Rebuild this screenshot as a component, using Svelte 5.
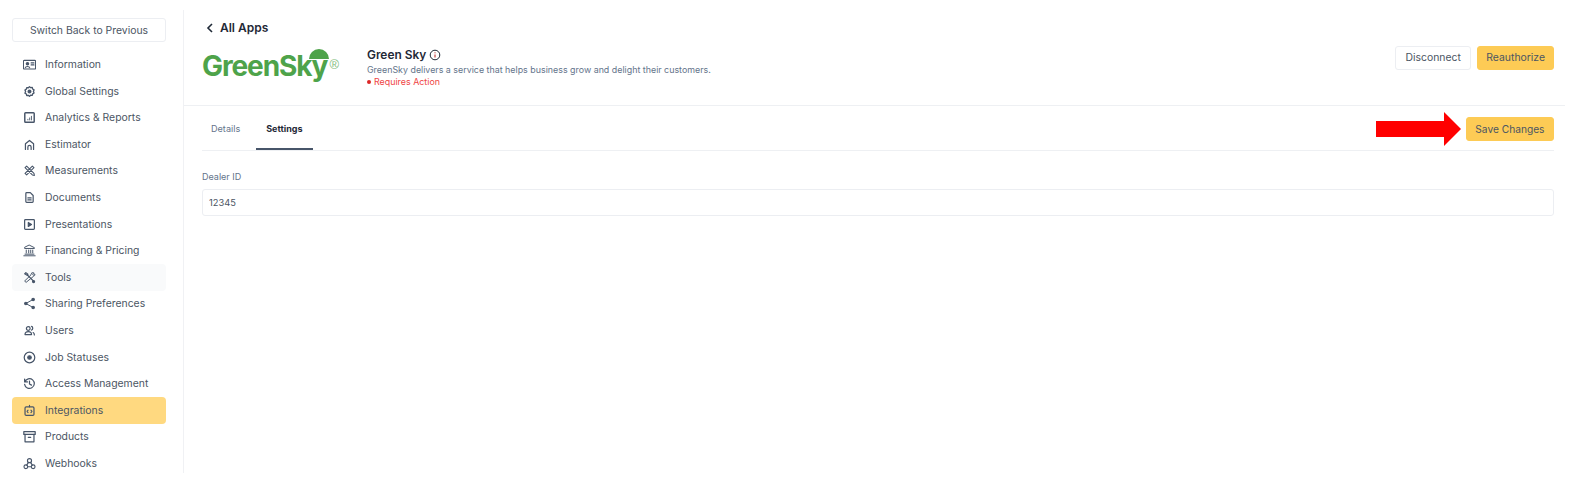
<script lang="ts">
  const items = [
    { label: "Information", icon: "info" },
    { label: "Global Settings", icon: "gear" },
    { label: "Analytics & Reports", icon: "chart" },
    { label: "Estimator", icon: "home" },
    { label: "Measurements", icon: "measure" },
    { label: "Documents", icon: "doc" },
    { label: "Presentations", icon: "play" },
    { label: "Financing & Pricing", icon: "bank" },
    { label: "Tools", icon: "tools", hover: true },
    { label: "Sharing Preferences", icon: "share" },
    { label: "Users", icon: "users" },
    { label: "Job Statuses", icon: "status" },
    { label: "Access Management", icon: "history" },
    { label: "Integrations", icon: "code", active: true },
    { label: "Products", icon: "archive" },
    { label: "Webhooks", icon: "hook" },
  ];
</script>

{#snippet icon(name: string)}
  <svg class="nav-icon" viewBox="0 0 16 16" fill="none" stroke="currentColor" stroke-width="1.4" stroke-linecap="round" stroke-linejoin="round">
    {#if name === "info"}
      <rect x="0.500" y="3" width="15" height="10.500" rx="1" /><circle cx="5.500" cy="7" r="1.500" fill="currentColor" /><path d="M2.800 12c.4-2 5-2 5.400 0M10 6h3.500M10 8.500h3.500" />
    {:else if name === "gear"}
      <path d="M8 2l1.400 1.300 2-.2.500 1.900 1.700 1-.8 1.900.8 2-1.700 1-.5 1.900-2-.2L8 14l-1.400-1.300-2 .2-.5-1.900-1.700-1 .8-2-.8-1.900 1.700-1 .5-1.900 2 .2z" stroke-width="1.600" /><circle cx="8" cy="8" r="1.800" fill="currentColor" />
    {:else if name === "chart"}
      <rect x="2.200" y="2.200" width="11.600" height="11.600" rx="1" stroke-width="1.800" /><path d="M6 11v-.8M8.200 11V8.500M10.400 11V6.500" stroke-width="1.100" />
    {:else if name === "home"}
      <path d="M3 14V7l5-4 5 4v7M6 14v-3a2 2 0 0 1 4 0v3" stroke-width="1.500" />
    {:else if name === "measure"}
      <path d="M2.500 4.500l2-2 9 9 .5 2.500-2.500-.5zM13.500 4.500l-2-2-9 9 2 2z" stroke-width="1.300" />
    {:else if name === "doc"}
      <path d="M3.500 3a1 1 0 0 1 1-1h4.500L12.500 5.500V13a1 1 0 0 1-1 1h-7a1 1 0 0 1-1-1zM6 8.500h4M6 11h4" stroke-width="1.500" />
    {:else if name === "play"}
      <rect x="2" y="2" width="12" height="12" rx="1" stroke-width="1.500" /><path d="M6.500 5.500v5l4-2.500z" fill="currentColor" />
    {:else if name === "bank"}
      <path d="M8 1.500l6 3v1H2v-1zM1 14.500h14M2.500 12.500h11M4 7.500v3.500M7 7.500v3.500M9.500 7.500v3.500M12 7.500v3.500" stroke-width="1.200" />
    {:else if name === "tools"}
      <path d="M2 3.500l1.500-1.500 2.500 2-.5 1.500zM6 5.500L13 12.500" stroke-width="1.500" /><path d="M11 2.500c1-.5 2-.5 2.800 0L12 4.300l.7 1 1.800-1.500c.3 1-.2 2.300-1.500 2.700L3.800 14 2 12.300l7.800-7.500c.1-1 .4-1.800 1.200-2.300z" stroke-width="1.200" /><circle cx="13" cy="13" r="1.300" fill="currentColor" />
    {:else if name === "share"}
      <circle cx="3.500" cy="8" r="1.500" fill="currentColor" /><circle cx="12.500" cy="3" r="1.500" fill="currentColor" /><circle cx="12.500" cy="13" r="1.500" fill="currentColor" /><path d="M3.500 8l9-5M3.500 8l9 5" stroke-width="1.200" />
    {:else if name === "users"}
      <circle cx="6.500" cy="5.500" r="2.300" stroke-width="1.500" /><path d="M2.500 13c0-5 8-5 8 0zM10.500 3c2 .5 2 4 0 4.500M14 13.500c0-1.500-.5-2.500-1.500-3" stroke-width="1.500" />
    {:else if name === "status"}
      <circle cx="8" cy="8" r="6.500" stroke-width="1.500" /><circle cx="8" cy="8" r="2.200" fill="currentColor" />
    {:else if name === "history"}
      <path d="M2 2.500v3.500h3.500M2.300 6A6 6 0 1 1 2 9M8 5v3.500l2.500 1.500" stroke-width="1.500" />
    {:else if name === "code"}
      <rect x="2.500" y="3.500" width="11" height="10.500" rx="1.500" stroke-width="1.500" /><path d="M8 1.500v2M6.200 7.500L5 9l1.200 1.500M9.800 7.500L11 9l-1.200 1.500" />
    {:else if name === "archive"}
      <rect x="1" y="2" width="14" height="3.500" stroke-width="1.500" /><path d="M2.500 5.500V14.500h11V5.500M6.500 9h3" stroke-width="1.500" />
    {:else if name === "hook"}
      <circle cx="8" cy="4.500" r="2.500" /><circle cx="3.500" cy="12" r="2.300" /><circle cx="12.500" cy="12" r="2.300" /><path d="M6.500 7L4.500 10M6 12h4M9.500 7l2 3" />
    {/if}
  </svg>
{/snippet}

<div class="page">
  <aside class="sidebar">
    <button class="switch">Switch Back to Previous</button>
    <nav>
      {#each items as item}
        <div class="nav-item" class:hover={item.hover} class:active={item.active}>
          {@render icon(item.icon)}
          <span>{item.label}</span>
        </div>
      {/each}
    </nav>
  </aside>

  <main>
    <header class="app-header">
      <div class="back">
        <svg width="8" height="10" viewBox="0 0 8 10" fill="none" stroke="#1f2937" stroke-width="1.600"><path d="M6 1L2 5l4 4" /></svg>
        All Apps
      </div>
      <div class="app-row">
        <div class="logo">
          <svg class="dome" viewBox="0 0 20 10"><path d="M0 10a10 10 0 0 1 20 0z" fill="#4ea34a" /></svg>
          <span class="logo-text">GreenSky</span><span class="reg">®</span>
        </div>
        <div class="app-info">
          <div class="app-title">
            Green Sky
            <svg width="12" height="12" viewBox="0 0 12 12" fill="none" stroke="#b91c1c"><circle cx="6" cy="6" r="4.800" stroke="#1f2937" /><path d="M6 5.500v3M6 3.300v1" /></svg>
          </div>
          <p class="desc">GreenSky delivers a service that helps business grow and delight their customers.</p>
          <p class="status"><i></i>Requires Action</p>
        </div>
        <div class="actions">
          <button class="btn">Disconnect</button>
          <button class="btn primary">Reauthorize</button>
        </div>
      </div>
    </header>

    <section class="content">
      <div class="tabs">
        <span class="tab">Details</span>
        <span class="tab current">Settings</span>
        <div class="tab-actions">
          <svg class="arrow" width="85" height="34" viewBox="0 0 85 34"><path d="M0 9h68V0l17 17-17 17V25H0z" fill="#ff0000" /></svg>
          <button class="btn primary save">Save Changes</button>
        </div>
      </div>
      <label class="field">
        <span>Dealer ID</span>
        <input value="12345" />
      </label>
    </section>
  </main>
</div>

<style>
  :global(body) {
    background: #fff;
    font-family: Inter, "Liberation Sans", sans-serif;
  }

  .page {
    display: flex;
    height: 482px;
    overflow: hidden;
    color: #4b5563;
    font-size: 10.400px;
  }

  .sidebar {
    box-sizing: border-box;
    width: 184px;
    height: 463px;
    margin-top: 10px;
    padding: 8px 17px 0 12px;
    border-right: 1px solid #f0f1f4;
    flex: none;
  }

  .switch {
    display: block;
    width: 100%;
    height: 24px;
    padding: 0;
    margin-bottom: 9.200px;
    background: #fff;
    border: 1px solid #eceef2;
    border-radius: 3px;
    color: #4b5563;
    font: 10.400px Inter, sans-serif;
  }

  .nav-item {
    display: flex;
    align-items: center;
    gap: 9px;
    height: 26.600px;
    padding-left: 11px;
    border-radius: 4px;
    color: #4b5563;
  }

  .nav-item.hover {
    background: #f9fafb;
  }

  .nav-item.active {
    background: #ffd980;
  }

  .nav-icon {
    width: 13px;
    height: 13px;
    flex: none;
    color: #475569;
  }

  main {
    flex: 1;
    min-width: 0;
  }

  .app-header {
    box-sizing: border-box;
    height: 106px;
    margin-right: 10px;
    padding: 20px 11px 0 18px;
    border-bottom: 1px solid #eef0f3;
  }

  .back {
    display: flex;
    align-items: center;
    gap: 6px;
    padding-left: 4px;
    height: 15px;
    color: #1f2937;
    font-size: 12px;
    font-weight: 600;
  }

  .app-row {
    display: flex;
    align-items: flex-start;
    margin-top: 11px;
  }

  .logo {
    position: relative;
    display: flex;
    align-items: flex-start;
    width: 165px;
    height: 40px;
    color: #4ea34a;
  }

  .logo-text {
    margin-top: 1px;
    font: 700 28px/38px Inter, sans-serif;
    letter-spacing: -1.100px;
  }

  .reg {
    font: 13px/12px "Liberation Sans", sans-serif;
    margin: 13px 0 0 2px;
    color: #7fbd7b;
  }

  .dome {
    position: absolute;
    left: 107px;
    top: 3px;
    width: 20px;
    height: 10px;
  }

  .app-info {
    flex: 1;
    padding-top: 1px;
  }

  .app-title {
    display: flex;
    align-items: center;
    gap: 3px;
    height: 15px;
    color: #1f2937;
    font-size: 11.900px;
    font-weight: 600;
  }

  .desc {
    margin: 2px 0 0;
    color: #64748b;
    font-size: 8.900px;
    line-height: 12px;
  }

  .status {
    display: flex;
    align-items: center;
    gap: 3px;
    margin: 0;
    color: #ef4444;
    font-size: 8.900px;
    line-height: 12px;
  }

  .status i {
    width: 4px;
    height: 4px;
    border-radius: 50%;
    background: #dc2626;
  }

  .actions {
    display: flex;
    gap: 6px;
  }

  .btn {
    height: 24px;
    padding: 0 9.500px 1px;
    background: #fff;
    border: 1px solid #eceef2;
    border-radius: 3px;
    color: #4b5563;
    font: 10.400px Inter, sans-serif;
  }

  .btn.primary {
    padding: 0 8px 1px;
    background: #fdcb55;
    border-color: #fdcb55;
  }

  .btn.save {
    padding: 0 8.500px;
    font-size: 10.200px;
  }

  .content {
    padding: 0 21px 0 18px;
  }

  .tabs {
    display: flex;
    align-items: center;
    height: 44px;
    border-bottom: 1px solid #eef0f3;
  }

  .tab {
    display: flex;
    align-items: center;
    height: 44px;
    box-sizing: border-box;
    padding: 0 9px;
    margin-right: 7px;
    font-size: 9.100px;
    color: #64748b;
  }

  .tab.current {
    color: #1f2937;
    font-weight: 700;
    font-size: 9px;
    border-bottom: 2px solid #475569;
    padding: 2px 10px 0;
  }

  .tab-actions {
    display: flex;
    align-items: center;
    margin-left: auto;
    margin-top: 2px;
    gap: 5px;
  }

  .field {
    display: block;
    margin-top: 20px;
  }

  .field span {
    display: block;
    font-size: 9px;
    line-height: 12px;
    color: #64748b;
  }

  .field input {
    box-sizing: border-box;
    display: block;
    width: 100%;
    height: 27px;
    margin-top: 6px;
    padding: 0 6px 1px;
    border: 1px solid #eceef2;
    border-radius: 3px;
    color: #4b5563;
    font: 9.300px Inter, sans-serif;
  }
</style>
